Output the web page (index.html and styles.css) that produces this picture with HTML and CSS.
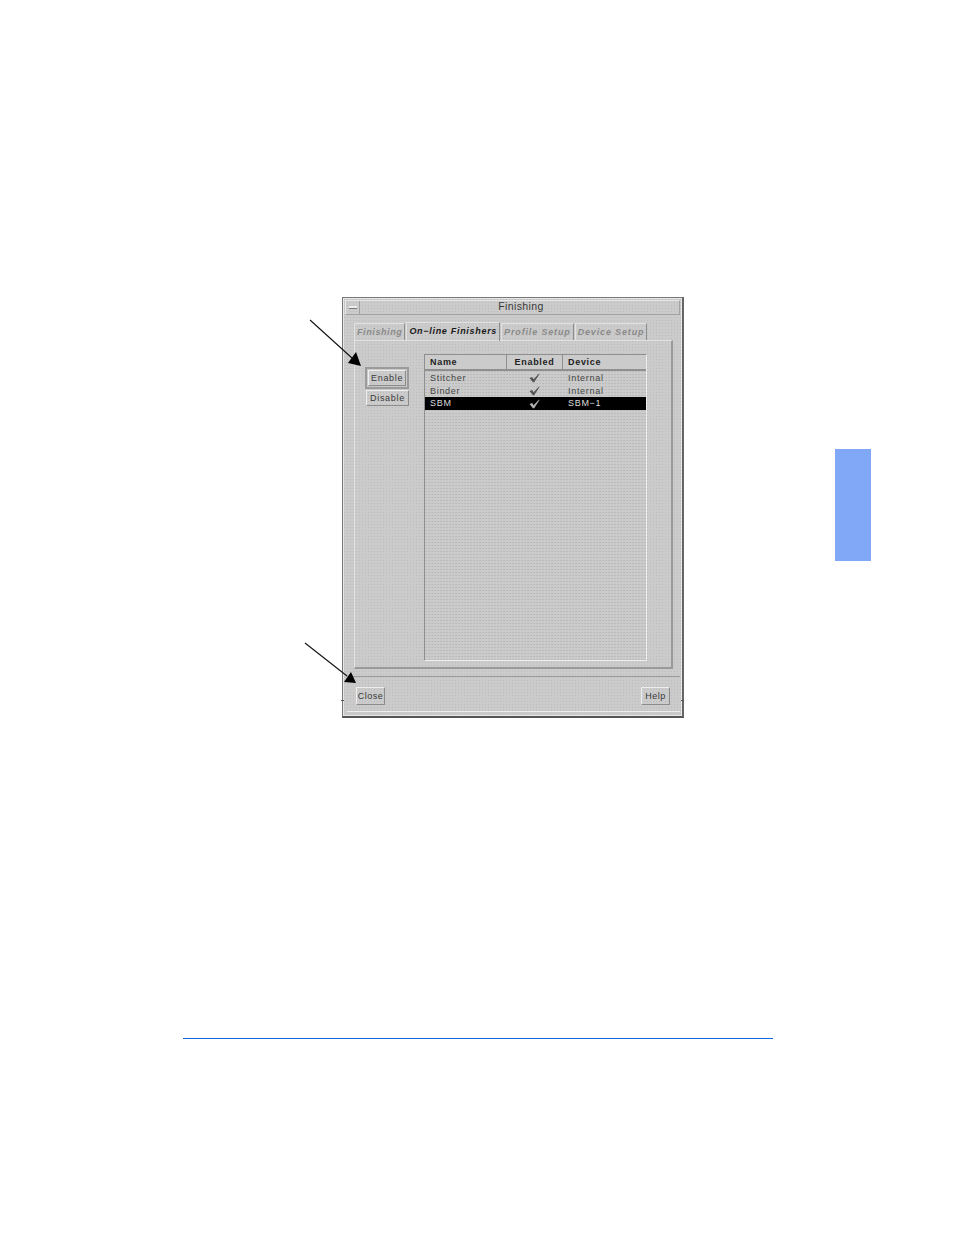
FILE: index.html
```html
<!DOCTYPE html>
<html lang="en">
<head>
    <meta charset="UTF-8">
    <title>Finishing</title>
    <link rel="stylesheet" href="styles.css">
</head>
<body>

<div class="page">
    <div class="window">
        <div class="titlebar">
            <div class="menu-btn"><span></span></div>
            <div class="title">Finishing</div>
        </div>

        <div class="content">
            <div class="tabs">
                <div class="tab first">Finishing</div>
                <div class="tab active">On&minus;line Finishers</div>
                <div class="tab wide">Profile Setup</div>
                <div class="tab wide">Device Setup</div>
            </div>

            <div class="panel">
                <div class="side-buttons">
                    <div class="default-ring"><button class="btn">Enable</button></div>
                    <button class="btn disable">Disable</button>
                </div>

                <div class="list">
                    <div class="list-head">
                        <div class="col-name">Name</div>
                        <div class="col-enabled">Enabled</div>
                        <div class="col-device">Device</div>
                    </div>
                    <div class="row">
                        <div class="col-name">Stitcher</div>
                        <div class="col-enabled"><svg class="check" viewBox="0 0 12 11"><path d="M0.5 5.5 L3.5 4.5 L5 7 L11 0.5 L11.5 1 L5.5 10.5 L4 10 Z"/></svg></div>
                        <div class="col-device">Internal</div>
                    </div>
                    <div class="row">
                        <div class="col-name">Binder</div>
                        <div class="col-enabled"><svg class="check" viewBox="0 0 12 11"><path d="M0.5 5.5 L3.5 4.5 L5 7 L11 0.5 L11.5 1 L5.5 10.5 L4 10 Z"/></svg></div>
                        <div class="col-device">Internal</div>
                    </div>
                    <div class="row selected">
                        <div class="col-name">SBM</div>
                        <div class="col-enabled"><svg class="check" viewBox="0 0 12 11"><path d="M0.5 5.5 L3.5 4.5 L5 7 L11 0.5 L11.5 1 L5.5 10.5 L4 10 Z"/></svg></div>
                        <div class="col-device">SBM&minus;1</div>
                    </div>
                </div>
            </div>
        </div>

        <div class="actions">
            <button class="btn">Close</button>
            <button class="btn">Help</button>
        </div>
    </div>

    <div class="side-tab"></div>
    <div class="footer-rule"></div>

    <!-- callout arrows -->
    <svg class="arrows" viewBox="0 0 954 1235">
        <line x1="310" y1="320" x2="352" y2="358"/>
        <polygon points="361,366 348,363 356,352"/>
        <line x1="305" y1="643" x2="347" y2="676"/>
        <polygon points="356,683 344,682 351,672"/>
    </svg>
</div>

</body>
</html>
```

FILE: styles.css
```css
* {
    margin: 0;
    padding: 0;
    box-sizing: border-box;
}

body {
    background-color: #fff;
    font-family: "Liberation Sans", Arial, sans-serif;
}

.page {
    position: relative;
    width: 954px;
    height: 1235px;
    padding: 297px 0 0 342px;
    overflow: hidden;
}

.window {
    position: relative;
    display: flex;
    flex-direction: column;
    width: 342px;
    height: 421px;
    padding: 2px 2px 3px 2px;
    border: 1px solid #777;
    border-bottom: 2px solid #555;
    border-right: 2px solid #666;
    box-shadow: inset 0 0 0 1px #e8e8e8;
    font-size: 9px;
    letter-spacing: 0.7px;
    color: #222;
    background-color: #cbcbcb;
    background-image: radial-gradient(circle, #bdbdbd 0.7px, transparent 0.8px);
    background-size: 3px 3px;
}

/* resize handle ticks on the frame */
.window::before,
.window::after {
    content: "";
    position: absolute;
    top: 402px;
    width: 3px;
    height: 1px;
    background: #555;
}

.window::before {
    left: -2px;
}

.window::after {
    right: -2px;
}

.titlebar {
    display: flex;
    height: 15px;
    border: 1px solid #a2a2a2;
    border-top-color: #e6e6e6;
    border-left-color: #e6e6e6;
}

.menu-btn {
    display: flex;
    align-items: center;
    justify-content: center;
    width: 14px;
    border-right: 1px solid #a0a0a0;
}

.menu-btn span {
    display: block;
    width: 8px;
    height: 3px;
    background: #eee;
    border-bottom: 1px solid #777;
}

.title {
    flex: 1;
    padding-left: 3px;
    text-align: center;
    font-size: 10.5px;
    line-height: 10px;
    letter-spacing: 0.4px;
    color: #3a3a3a;
}

.content {
    flex: 1;
    padding: 7px 7px 0 9px;
}

.tabs {
    display: flex;
    height: 18px;
    gap: 1px;
}

.tab {
    height: 17px;
    margin-top: 1px;
    padding: 0 2px;
    border: 1px solid #e2e2e2;
    border-right-color: #8c8c8c;
    border-bottom: 0;
    font-weight: bold;
    font-style: italic;
    line-height: 16px;
    color: #8a8a8a;
}

.tab.first {
    letter-spacing: 0.6px;
}

.tab.wide {
    letter-spacing: 0.85px;
}

.tab.active {
    position: relative;
    z-index: 1;
    height: 19px;
    margin-top: 0;
    color: #1a1a1a;
}

.panel {
    display: flex;
    height: 329px;
    border: 1px solid #e2e2e2;
    border-right: 2px solid #9a9a9a;
    border-bottom: 2px solid #9a9a9a;
    padding: 13px 24px 6px 10px;
}

.side-buttons {
    display: flex;
    flex-direction: column;
    align-items: flex-start;
    width: 59px;
    padding-top: 13px;
}

.default-ring {
    padding: 1px;
    border: 2px solid #9b9b9b;
}

.default-ring .btn {
    padding: 0 2px;
}

.btn {
    padding: 0 3px;
    height: 16px;
    border: 1px solid #eee;
    border-right-color: #8c8c8c;
    border-bottom-color: #8c8c8c;
    background: transparent;
    font-family: inherit;
    font-size: 9px;
    letter-spacing: 0.7px;
    color: #3a3a3a;
}

.disable {
    margin: 1px 0 0 1px;
}

.list {
    flex: 1;
    border: 1px solid #8f8f8f;
    border-right-color: #eee;
    border-bottom-color: #eee;
    background-image: radial-gradient(circle, #b8b8b8 0.8px, transparent 0.9px);
    background-size: 3px 3px;
}

.list-head {
    display: flex;
    height: 16px;
    margin-bottom: 1px;
    border-bottom: 2px solid #8f8f8f;
    background-color: #cbcbcb;
    font-weight: bold;
    line-height: 14px;
    color: #222;
}

.list-head .col-name {
    border-right: 1px solid #8f8f8f;
}

.list-head .col-enabled {
    border-right: 1px solid #8f8f8f;
}

.row {
    display: flex;
    height: 12.7px;
    line-height: 13px;
    color: #444;
}

.row.selected {
    background: #000;
    color: #ddd;
}

.col-name {
    width: 82px;
    padding-left: 5px;
}

.col-enabled {
    display: flex;
    justify-content: center;
    align-items: center;
    width: 56px;
}

.col-device {
    flex: 1;
    padding-left: 5px;
}

.check {
    width: 11px;
    height: 10px;
    margin-right: 2px;
    fill: #555;
}

.selected .check {
    fill: #b0b0b0;
}

.actions {
    display: flex;
    justify-content: space-between;
    align-items: flex-start;
    height: 36px;
    margin: 0 0 1px 2px;
    padding: 10px 10px 0 9px;
    border-top: 1px solid #9a9a9a;
    border-bottom: 1px solid #eee;
}

.actions .btn {
    width: 29px;
    height: 18px;
    padding: 0;
    letter-spacing: 0.5px;
}

.side-tab {
    position: absolute;
    left: 835px;
    top: 449px;
    width: 36px;
    height: 112px;
    background: #80a8f6;
}

.footer-rule {
    position: absolute;
    left: 183px;
    top: 1038px;
    width: 590px;
    height: 1px;
    background: #1464e6;
}

.arrows {
    position: absolute;
    left: 0;
    top: 0;
    width: 954px;
    height: 1235px;
}

.arrows line {
    stroke: #111;
    stroke-width: 1.1;
}

.arrows polygon {
    fill: #000;
}
```
